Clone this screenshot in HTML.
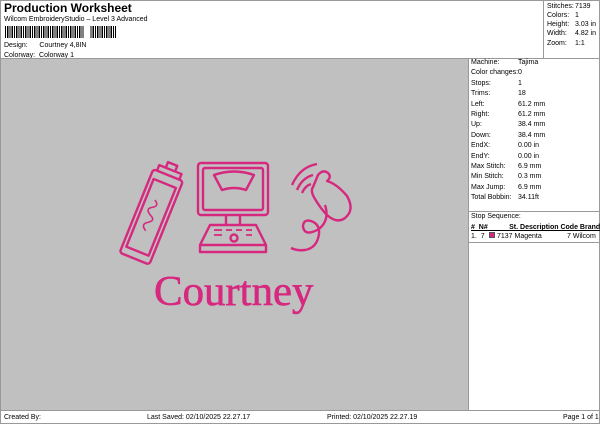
<!DOCTYPE html>
<html><head><style>
*{margin:0;padding:0;box-sizing:border-box}
body{width:600px;height:424px;background:#fff;font-family:"Liberation Sans",sans-serif;font-size:7px;color:#000;position:relative;overflow:hidden}
.a{position:absolute;white-space:nowrap;line-height:9px}
</style></head><body>
<div class="a" style="left:0;top:0;width:600px;height:424px;border:1px solid #999"></div>
<div class="a" style="left:4px;top:2px;font-size:12px;font-weight:bold;line-height:13px">Production Worksheet</div>
<div class="a" style="left:4px;top:15px">Wilcom EmbroideryStudio – Level 3 Advanced</div>
<div class="a" style="left:5px;top:26px;width:111px;height:12px;background:repeating-linear-gradient(90deg,#000 0 1px,#fff 1px 2px,#000 2px 3.5px,#fff 3.5px 4.5px)"></div>
<div class="a" style="left:84px;top:26px;width:6px;height:12px;background:#fff"></div>
<div class="a" style="left:4px;top:41px">Design:&nbsp;&nbsp;&nbsp;&nbsp;&nbsp; Courtney 4,8IN</div>
<div class="a" style="left:4px;top:51px">Colorway:&nbsp; Colorway 1</div>
<div class="a" style="left:543px;top:0;width:1px;height:58px;background:#999"></div>
<div class="a" style="left:547px;top:2px">Stitches:</div><div class="a" style="left:575px;top:2px">7139</div>
<div class="a" style="left:547px;top:11px">Colors:</div><div class="a" style="left:575px;top:11px">1</div>
<div class="a" style="left:547px;top:20px">Height:</div><div class="a" style="left:575px;top:20px">3.03 in</div>
<div class="a" style="left:547px;top:29px">Width:</div><div class="a" style="left:575px;top:29px">4.82 in</div>
<div class="a" style="left:547px;top:39px">Zoom:</div><div class="a" style="left:575px;top:39px">1:1</div>
<div class="a" style="left:0;top:58px;width:600px;height:1px;background:#999"></div>
<div class="a" style="left:1px;top:59px;width:467px;height:351px;background:#c0c0c0"></div>
<div class="a" style="left:468px;top:59px;width:1px;height:351px;background:#999"></div>
<div class="a" style="left:471px;top:58px;line-height:10.4px">Machine:<br>Color changes:<br>Stops:<br>Trims:<br>Left:<br>Right:<br>Up:<br>Down:<br>EndX:<br>EndY:<br>Max Stitch:<br>Min Stitch:<br>Max Jump:<br>Total Bobbin:</div>
<div class="a" style="left:518px;top:58px;line-height:10.4px">Tajima<br>0<br>1<br>18<br>61.2 mm<br>61.2 mm<br>38.4 mm<br>38.4 mm<br>0.00 in<br>0.00 in<br>6.9 mm<br>0.3 mm<br>6.9 mm<br>34.11ft</div>
<div class="a" style="left:469px;top:211px;width:131px;height:1px;background:#999"></div>
<div class="a" style="left:471px;top:212px">Stop Sequence:</div>
<div class="a" style="left:471px;top:223px;font-weight:bold;text-decoration:underline">#&nbsp; N#&nbsp;&nbsp;&nbsp;&nbsp;&nbsp;&nbsp;&nbsp;&nbsp;&nbsp;&nbsp; St. Description Code Brand</div>
<div class="a" style="left:471px;top:232px">1.&nbsp; 7</div>
<div class="a" style="left:489px;top:232px;width:6px;height:6px;background:#d6287f;border:1px solid #555"></div>
<div class="a" style="left:497px;top:232px">7137 Magenta</div>
<div class="a" style="left:567px;top:232px">7 Wilcom</div>
<div class="a" style="left:469px;top:242px;width:131px;height:1px;background:#999"></div>
<div class="a" style="left:0;top:410px;width:600px;height:1px;background:#999"></div>
<div class="a" style="left:4px;top:413px">Created By:</div>
<div class="a" style="left:147px;top:413px">Last Saved: 02/10/2025 22.27.17</div>
<div class="a" style="left:327px;top:413px">Printed: 02/10/2025 22.27.19</div>
<div class="a" style="left:563px;top:413px">Page 1 of 1</div>
<svg class="a" style="left:0;top:0" width="600" height="424" fill="none" stroke="#d6287f" stroke-width="2.4" stroke-linejoin="round">
<g transform="rotate(22 153 210)">
<rect x="138" y="172" width="32" height="90" rx="3"/><rect x="142" y="181" width="24" height="73"/>
<path d="M142 172 v-6 h24 v6 M149 166 v-6 h10 v6"/>
<path d="M151 200 q7 4 0 8 q-6 4 2 8 q7 3 -1 8 q-5 4 2 8" stroke-width="1.6"/>
</g>
<rect x="198" y="163" width="70" height="52" rx="3"/><rect x="203" y="168" width="60" height="42" rx="2"/>
<path d="M214 175 q20 -7 40 0 l-8 15 q-12 -4 -24 0 z"/>
<path d="M226 215 v10 M240 215 v10"/>
<path d="M210 225 h46 l10 20 h-66 z M200 245 h66 v7 h-66 z"/>
<path d="M214 230 h8 M226 230 h6 M236 230 h6 M246 230 h6 M214 235 h8 M246 235 h6" stroke-width="1.8"/>
<circle cx="234" cy="238" r="3.5"/>
<path d="M292 185 q8 -18 25 -21 M297 190 q5 -12 16 -15 M302 193 q3 -7 9 -9"/>
<path d="M318 175 q5 -6 10 -2 q4 4 -1 8 q10 3 20 15 q8 14 -2 22 q-8 6 -18 -3 q-6 -6 -12 -16 q-5 -8 -2 -12 z"/>
<path d="M325 205 q5 15 -6 24 q-14 8 -16 -2 q0 -8 8 -6 q9 3 8 13 q-2 14 -14 16 q-8 1 -14 -2"/>
</svg>
<div class="a" style="left:154px;top:270px;font-family:'Liberation Serif',serif;font-size:42px;color:#d6287f;line-height:44px;-webkit-text-stroke:0.6px #d6287f;transform:scaleX(1.02);transform-origin:left">Courtney</div>
</body></html>
